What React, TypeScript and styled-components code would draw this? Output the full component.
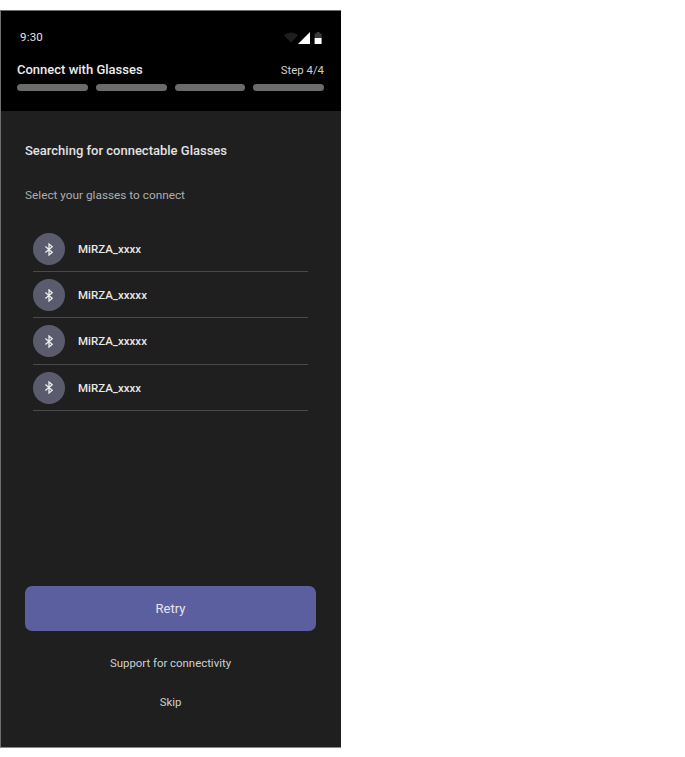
import styled, { createGlobalStyle } from 'styled-components';

const GlobalStyle = createGlobalStyle`
  html, body {
    margin: 0;
    padding: 0;
    background: #fff;
    font-family: Roboto, "Liberation Sans", sans-serif;
  }
`;

const Page = styled.div`
  padding: 10px 0 0 0;
  height: 747px;
`;

const Phone = styled.div`
  box-sizing: border-box;
  width: 341px;
  height: 738px;
  display: flex;
  flex-direction: column;
  border: 1px solid #6f6f6f;
  border-right: none;
  border-bottom-color: #8a8a8a;
  background: #1f1f1f;
`;

const Header = styled.header`
  box-sizing: border-box;
  height: 100px;
  background: #000;
  padding: 19px 17px 0 16px;
  display: flex;
  flex-direction: column;
`;

const StatusBar = styled.div`
  display: flex;
  align-items: center;
  justify-content: space-between;
  padding: 0 2px 0 3px;
  height: 14px;
`;

const Clock = styled.span`
  font-size: 11.5px;
  color: #e4e4e4;
  letter-spacing: 0.2px;
`;

const TitleRow = styled.div`
  display: flex;
  align-items: baseline;
  justify-content: space-between;
  margin-top: 18px;
  height: 18px;
`;

const HeaderTitle = styled.span`
  font-size: 13px;
  font-weight: 500;
  color: #ececec;
`;

const StepLabel = styled.span`
  font-size: 11.4px;
  color: #cfcfcf;
`;

const Steps = styled.div`
  display: grid;
  grid-template-columns: repeat(4, 1fr);
  gap: 8px;
  margin-top: 4px;
`;

const StepBar = styled.div`
  height: 7px;
  border-radius: 4px;
  background: #6b6b6b;
`;

const Body = styled.main`
  flex: 1;
  display: flex;
  flex-direction: column;
  padding: 32px 25px 0 24px;
`;

const Heading = styled.h1`
  margin: 0;
  font-size: 13px;
  line-height: 16px;
  font-weight: 500;
  color: #e2e2e2;
`;

const SubHeading = styled.p`
  margin: 28px 0 0 0;
  font-size: 11.8px;
  line-height: 16px;
  color: #adadad;
`;

const DeviceList = styled.ul`
  list-style: none;
  margin: 23px 8px 0 8px;
  padding: 0;
`;

const DeviceRow = styled.li`
  box-sizing: border-box;
  height: 46.2px;
  display: flex;
  align-items: center;
  gap: 13px;
  border-bottom: 1px solid #4a4a4a;
  padding-top: 1px;
`;

const DeviceIcon = styled.span`
  width: 32px;
  height: 32px;
  border-radius: 50%;
  background: #5b5b6e;
  display: flex;
  align-items: center;
  justify-content: center;
`;

const DeviceName = styled.span`
  font-size: 11.5px;
  font-weight: 500;
  color: #e8e8e8;
`;

const Actions = styled.div`
  margin-top: auto;
  display: flex;
  flex-direction: column;
  align-items: center;
  padding-bottom: 37px;
`;

const RetryButton = styled.button`
  width: 100%;
  height: 45px;
  border: none;
  border-radius: 7px;
  background: #5b5fa0;
  color: #e6e6f2;
  font-family: inherit;
  font-size: 13px;
`;

const LinkButton = styled.button<{ $top: number }>`
  margin-top: ${({ $top }) => $top}px;
  height: 16px;
  padding: 0;
  border: none;
  background: none;
  color: #cfcfcf;
  font-family: inherit;
  font-size: 11.4px;
  line-height: 16px;
`;

const BluetoothGlyph = () => (
  <svg width="10" height="13" viewBox="0 0 10 13" fill="none" stroke="#ececec" strokeWidth="1.3">
    <path d="M1.4 3.6 8.2 9.2 5 12V1l3.2 2.8L1.4 9.4" />
  </svg>
);

const StatusIcons = () => (
  <svg width="38" height="14" viewBox="0 0 38 14">
    <path d="M0 5.2C2 3.4 5 2.6 7 2.6S12 3.4 14 5.2L7 12.8Z" fill="#1e1e1e" />
    <path d="M14 14 26 2V14Z" fill="#fff" />
    <path d="M30.6 3.4H32.6V2H35.6V3.4H37.6V8H30.6Z" fill="#3c3c3c" />
    <path d="M30.6 8H37.6V14H30.6Z" fill="#fff" />
  </svg>
);

const devices = ['MiRZA_xxxx', 'MiRZA_xxxxx', 'MiRZA_xxxxx', 'MiRZA_xxxx'];

export default function App() {
  return (
    <Page>
      <GlobalStyle />
      <Phone>
        <Header>
          <StatusBar>
            <Clock>9:30</Clock>
            <StatusIcons />
          </StatusBar>
          <TitleRow>
            <HeaderTitle>Connect with Glasses</HeaderTitle>
            <StepLabel>Step 4/4</StepLabel>
          </TitleRow>
          <Steps>
            {[0, 1, 2, 3].map((i) => (
              <StepBar key={i} />
            ))}
          </Steps>
        </Header>
        <Body>
          <Heading>Searching for connectable Glasses</Heading>
          <SubHeading>Select your glasses to connect</SubHeading>
          <DeviceList>
            {devices.map((name, i) => (
              <DeviceRow key={i}>
                <DeviceIcon>
                  <BluetoothGlyph />
                </DeviceIcon>
                <DeviceName>{name}</DeviceName>
              </DeviceRow>
            ))}
          </DeviceList>
          <Actions>
            <RetryButton type="button">Retry</RetryButton>
            <LinkButton type="button" $top={24}>
              Support for connectivity
            </LinkButton>
            <LinkButton type="button" $top={23}>
              Skip
            </LinkButton>
          </Actions>
        </Body>
      </Phone>
    </Page>
  );
}
